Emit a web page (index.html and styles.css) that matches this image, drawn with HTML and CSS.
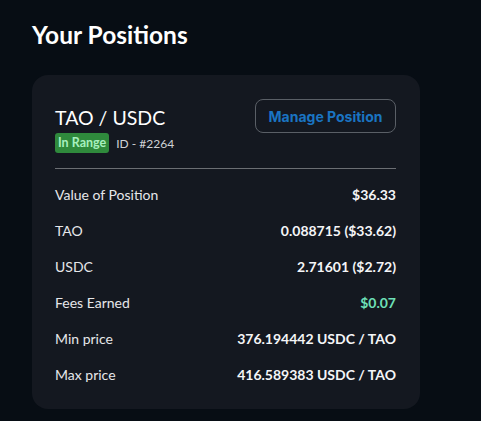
FILE: index.html
```html
<!DOCTYPE html>
<html>
<head>
<meta charset="utf-8">
<link rel="stylesheet" href="styles.css">
</head>
<body>
<div class="page">
  <h1 class="title">Your Positions</h1>
  <div class="card">
    <div class="head">
      <div class="pair">
        <div class="pair-name">TAO / USDC</div>
        <div class="meta">
          <span class="badge">In Range</span>
          <span class="id">ID - #2264</span>
        </div>
      </div>
      <button class="manage">Manage Position</button>
    </div>
    <div class="divider"></div>
    <div class="rows">
      <div class="row"><span class="label">Value of Position</span><span class="value">$36.33</span></div>
      <div class="row"><span class="label">TAO</span><span class="value">0.088715 ($33.62)</span></div>
      <div class="row"><span class="label">USDC</span><span class="value">2.71601 ($2.72)</span></div>
      <div class="row"><span class="label">Fees Earned</span><span class="value green">$0.07</span></div>
      <div class="row"><span class="label">Min price</span><span class="value">376.194442 USDC / TAO</span></div>
      <div class="row"><span class="label">Max price</span><span class="value">416.589383 USDC / TAO</span></div>
    </div>
  </div>
</div>
</body>
</html>
```
FILE: styles.css
```css
html, body {
  margin: 0;
  padding: 0;
  background: #070d14;
}
body {
  font-family: "Lato", "Noto Sans", sans-serif;
  color: #f2f3f5;
  width: 481px;
  height: 421px;
  overflow: hidden;
}
.page {
  padding: 20px 0 0 32px;
}
.title {
  margin: 0;
  font-size: 24.5px;
  font-weight: 700;
  line-height: 30px;
  color: #ffffff;
}
.card {
  margin-top: 25px;
  width: 388px;
  height: 334px;
  box-sizing: border-box;
  background: #141820;
  border-radius: 16px;
  padding: 24px 24px 0 23px;
}
.head {
  display: flex;
  justify-content: space-between;
  align-items: flex-start;
}
.pair-name {
  margin-top: 6px;
  font-size: 19.5px;
  line-height: 26px;
  color: #ffffff;
}
.meta {
  display: flex;
  align-items: center;
  gap: 7px;
  margin-top: 2px;
}
.badge {
  background: #2f8a3c;
  color: #a8f0bf;
  font-size: 12.5px;
  font-weight: 700;
  border-radius: 3px;
  padding: 0 3px;
  line-height: 20px;
  height: 20px;
}
.id {
  font-size: 12px;
  color: #d0d2d6;
}
.manage {
  font-family: "Inter", sans-serif;
  background: transparent;
  border: 1px solid #5a5f66;
  border-radius: 8px;
  color: #1a74c2;
  font-size: 14px;
  font-weight: 700;
  height: 34px;
  width: 141px;
  padding: 0;
}
.divider {
  margin-top: 15px;
  height: 1px;
  background: #6b6e73;
  width: 341px;
}
.rows {
  display: flex;
  flex-direction: column;
  padding-top: 7px;
  width: 341px;
}
.row {
  display: flex;
  justify-content: space-between;
  align-items: center;
  height: 36px;
  font-size: 14px;
}
.label {
  color: #e6e7ea;
}
.value {
  font-weight: 700;
  color: #f4f5f7;
}
.value.green {
  color: #6ee0b8;
}
```
